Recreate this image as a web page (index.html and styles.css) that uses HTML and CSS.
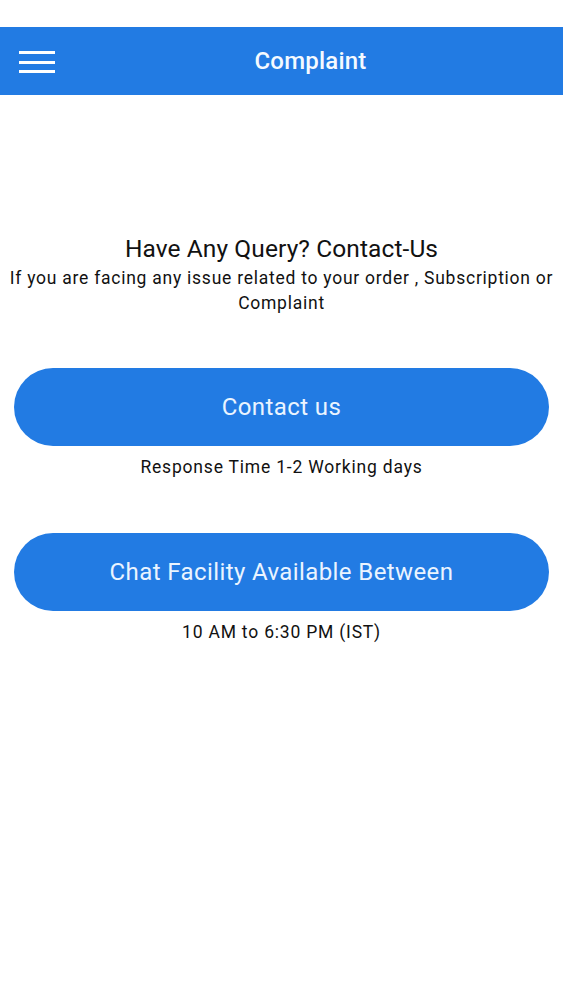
FILE: index.html
```html
<!DOCTYPE html>
<html lang="en">
<head>
    <meta charset="UTF-8">
    <meta name="viewport" content="width=device-width, initial-scale=1.0">
    <title>Complaint</title>
    <link rel="stylesheet" href="styles.css">
</head>
<body>
    <div class="status-bar"></div>
    <header class="toolbar">
        <button class="menu-btn" aria-label="Menu">
            <svg width="36" height="24" viewBox="0 0 36 24">
                <rect x="0" y="2" width="36" height="3" fill="#fff"/>
                <rect x="0" y="12" width="36" height="3" fill="#fff"/>
                <rect x="0" y="21" width="36" height="3" fill="#fff"/>
            </svg>
        </button>
        <h1 class="toolbar-title">Complaint</h1>
    </header>

    <main class="content">
        <div class="intro">
            <h2>Have Any Query? Contact-Us</h2>
            <p>If you are facing any issue related to your order , Subscription or Complaint</p>
        </div>

        <div class="action">
            <button class="pill-btn">Contact us</button>
            <p class="note">Response Time 1-2 Working days</p>
        </div>

        <div class="action">
            <button class="pill-btn">Chat Facility Available Between</button>
            <p class="note">10 AM to 6:30 PM (IST)</p>
        </div>
    </main>
</body>
</html>
```

FILE: styles.css
```css
body {
    font-family: Roboto, "Noto Sans", sans-serif;
    background-color: #fff;
    margin: 0;
    padding: 0;
    color: #111;
}
.status-bar {
    height: 27px;
    background-color: #fff;
}
.toolbar {
    background-color: #227be3;
    height: 68px;
    display: flex;
    align-items: center;
    position: relative;
}
.menu-btn {
    background: none;
    border: none;
    padding: 0;
    margin-left: 19px;
    display: flex;
    cursor: pointer;
}
.toolbar-title {
    position: absolute;
    left: 0;
    right: 0;
    text-align: center;
    margin: 0 0 0 58px;
    font-size: 24px;
    font-weight: 500;
    letter-spacing: 0.2px;
    color: #f4faff;
    pointer-events: none;
}
.content {
    padding: 0 6px;
}
.intro {
    text-align: center;
    padding-top: 140px;
}
.intro h2 {
    font-size: 24.5px;
    font-weight: 400;
    margin: 0 0 3px;
    line-height: 28px;
    letter-spacing: 0.1px;
}
.intro p {
    font-size: 17.5px;
    letter-spacing: 0.75px;
    line-height: 25px;
    margin: 0 -6px;
}
.action {
    margin-top: 52px;
    text-align: center;
    padding: 0 8px;
}
.action + .action {
    margin-top: 54px;
}
.pill-btn {
    display: block;
    width: 100%;
    height: 78px;
    border: none;
    border-radius: 39px;
    background-color: #227be3;
    color: #eaf4ff;
    font-family: Roboto, "Noto Sans", sans-serif;
    font-size: 24px;
    letter-spacing: 0.4px;
    cursor: pointer;
}
.note {
    font-size: 17.5px;
    letter-spacing: 0.8px;
    margin: 9px 0 0;
    line-height: 24px;
}
```
